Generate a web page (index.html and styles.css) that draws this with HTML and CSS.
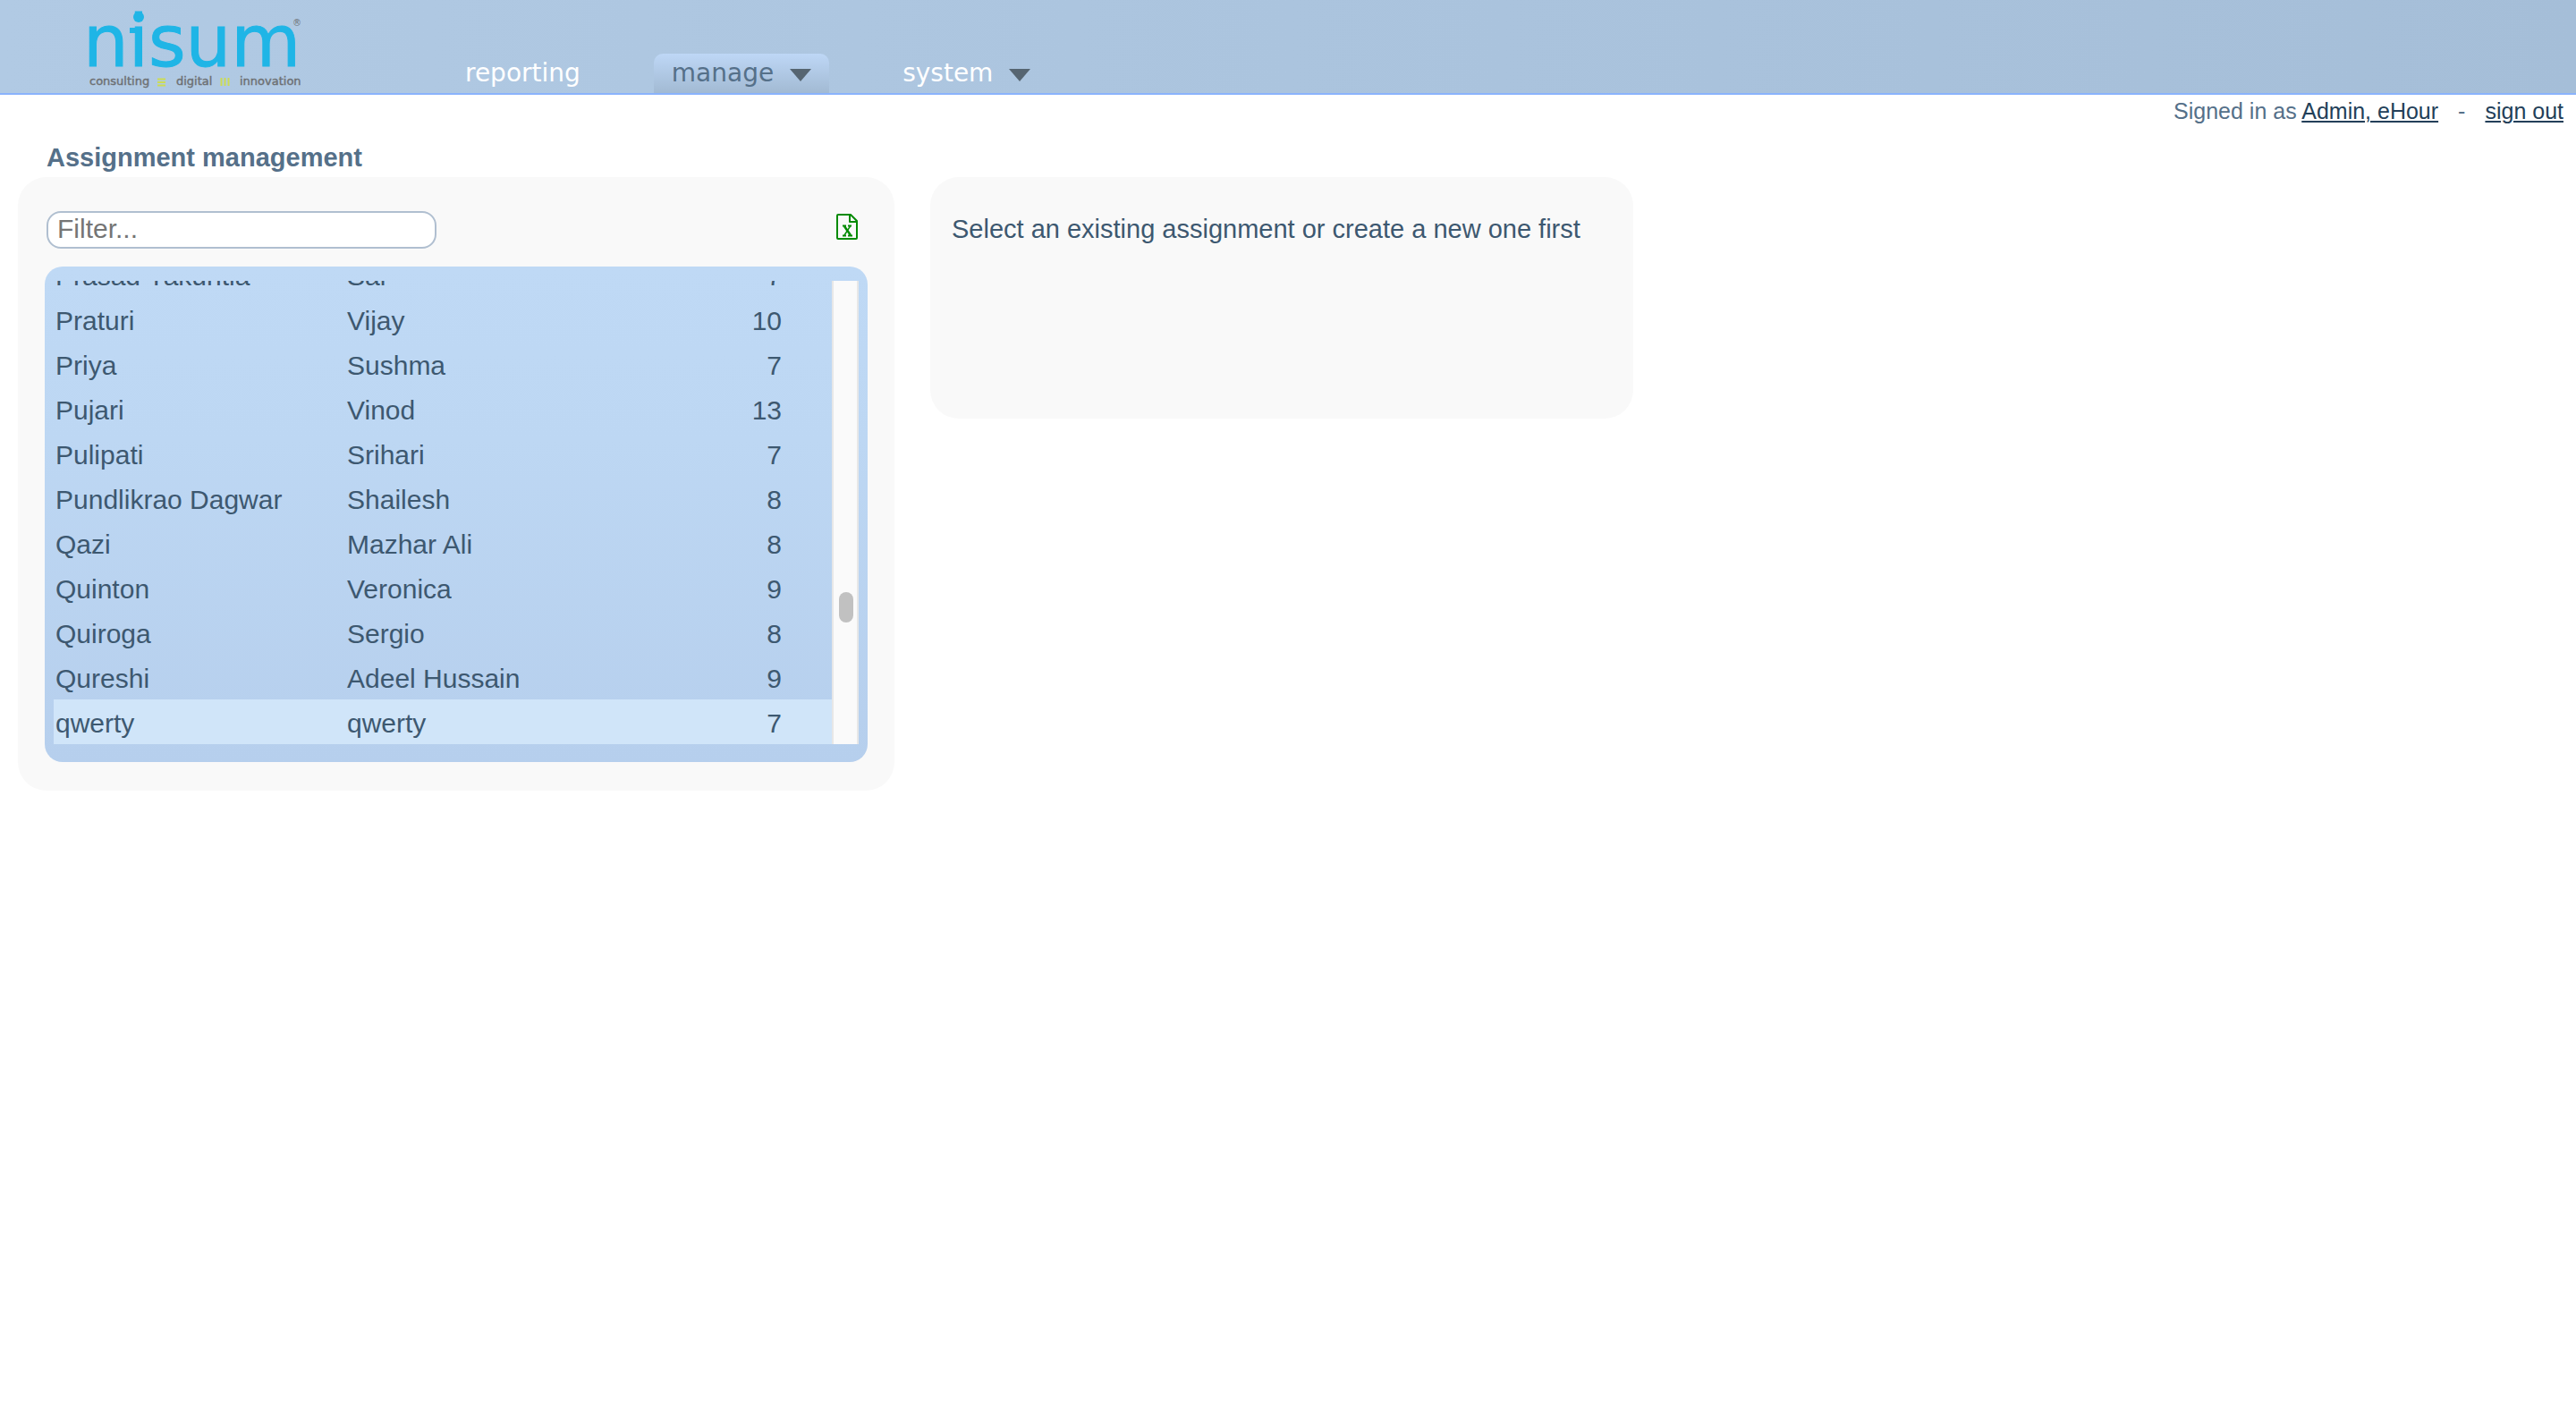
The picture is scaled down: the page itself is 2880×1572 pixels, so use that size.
FILE: index.html
```html
<!DOCTYPE html>
<html lang="en">
<head>
<meta charset="utf-8">
<title>Assignment management</title>
<link rel="stylesheet" href="styles.css">
</head>
<body>
<header class="topbar">
  <a class="logo" href="#" aria-label="nisum">
    <svg width="260" height="104" viewBox="90 0 260 104">
      <text class="logo-name" x="93" y="74">nisum</text>
      <ellipse class="logo-blue" cx="155" cy="19" rx="6" ry="6"/>
      <rect class="logo-blue" x="145" y="31" width="8" height="6"/>
      <text class="logo-reg" x="327" y="29">®</text>
      <text class="logo-tag" x="100" y="95">consulting</text>
      <path class="logo-bars" d="M176 88.500h9M176 92h9M176 95.500h9M247.500 87v9M251.500 87v9M255.500 87v9"/>
      <text class="logo-tag" x="197" y="95">digital</text>
      <text class="logo-tag" x="268" y="95">innovation</text>
    </svg>
  </a>
  <nav class="menu">
    <a class="menu-item" href="#">reporting</a>
    <a class="menu-item active" href="#">manage <svg class="caret" width="24" height="14" viewBox="0 0 24 14"><path d="M0 0h24L12 14z"/></svg></a>
    <a class="menu-item" href="#">system <svg class="caret" width="24" height="14" viewBox="0 0 24 14"><path d="M0 0h24L12 14z"/></svg></a>
  </nav>
</header>
<div class="userbar">
  <span>Signed in as <a href="#">Admin, eHour</a></span>
  <span>-</span>
  <a href="#">sign out</a>
</div>
<main class="content">
  <h1 class="title">Assignment management</h1>
  <div class="panels">
    <section class="card list-card">
      <div class="toolbar">
        <input class="filter" type="text" placeholder="Filter..." aria-label="Filter">
        <button class="export" type="button" aria-label="Export to Excel">
          <svg width="26" height="30" viewBox="0 0 26 30" fill="none" stroke="#048a04" stroke-width="2" stroke-linejoin="round">
            <path d="M2 1h14l7 7v19a1 1 0 0 1-1 1H2a1 1 0 0 1-1-1V2a1 1 0 0 1 1-1z"/>
            <path d="M15 1v8h8"/>
            <path d="M7 13.500h4M13 13.500h4M7 24.500h4M13 24.500h5"/>
            <path stroke-width="2.500" d="M9 14l7 10"/>
            <path stroke-width="1.500" d="M15.500 14L9 24"/>
          </svg>
        </button>
      </div>
      <div class="listbox">
        <div class="viewport">
          <table class="users">
            <tbody>
              <tr><td>Prasad Yakuntla</td><td>Sai</td><td>7</td></tr>
              <tr><td>Praturi</td><td>Vijay</td><td>10</td></tr>
              <tr><td>Priya</td><td>Sushma</td><td>7</td></tr>
              <tr><td>Pujari</td><td>Vinod</td><td>13</td></tr>
              <tr><td>Pulipati</td><td>Srihari</td><td>7</td></tr>
              <tr><td>Pundlikrao Dagwar</td><td>Shailesh</td><td>8</td></tr>
              <tr><td>Qazi</td><td>Mazhar Ali</td><td>8</td></tr>
              <tr><td>Quinton</td><td>Veronica</td><td>9</td></tr>
              <tr><td>Quiroga</td><td>Sergio</td><td>8</td></tr>
              <tr><td>Qureshi</td><td>Adeel Hussain</td><td>9</td></tr>
              <tr class="hover"><td>qwerty</td><td>qwerty</td><td>7</td></tr>
            </tbody>
          </table>
        </div>
        <div class="track"><div class="thumb"></div></div>
      </div>
    </section>
    <section class="card detail-card">
      <p class="hint">Select an existing assignment or create a new one first</p>
    </section>
  </div>
</main>
</body>
</html>
```
FILE: styles.css
```css
* { box-sizing: border-box; }

body {
  margin: 0;
  background: #fff;
  color: #3d5870;
  font-family: "Liberation Sans", Arial, sans-serif;
}

.topbar {
  display: flex;
  height: 106px;
  padding-left: 90px;
  background: linear-gradient(to right, #b1cae4, #a5bed8);
  border-bottom: 2px solid #8ab3fc;
}

.logo svg { display: block; }
.logo-name {
  font: 80px "DejaVu Sans", sans-serif;
  fill: #1fb5e6;
  stroke: #1fb5e6;
  stroke-width: 1px;
}
.logo-blue { fill: #1fb5e6; }
.logo-reg { font: 10px "DejaVu Sans", sans-serif; fill: #6d7073; }
.logo-tag {
  font: 13px "DejaVu Sans", sans-serif;
  fill: #6d7073;
  stroke: #6d7073;
  stroke-width: 0.4px;
}
.logo-bars { stroke: #ccdc55; stroke-width: 2px; fill: none; }

.menu {
  display: flex;
  align-items: flex-end;
  gap: 62px;
  margin-left: 150px;
}
.menu-item {
  display: flex;
  align-items: center;
  gap: 18px;
  height: 44px;
  padding: 0 20px;
  font: 28px/44px "DejaVu Sans", Verdana, sans-serif;
  color: #fff;
  text-decoration: none;
}
.menu-item.active {
  color: #557089;
  background: linear-gradient(#bed7f6, #a2bad3);
  border-radius: 10px 10px 0 0;
}
.caret { fill: #566571; margin-top: 4px; }

.userbar {
  display: flex;
  justify-content: flex-end;
  gap: 22px;
  padding-right: 14px;
  font-size: 25px;
  line-height: 36px;
  color: #557089;
}
.userbar a {
  color: #233f59;
  text-decoration-thickness: 2px;
  text-underline-offset: 2px;
}

.content { padding: 12px 20px 40px; }
.title {
  margin: 0;
  padding-left: 32px;
  font-size: 29px;
  line-height: 44px;
  color: #557089;
}

.panels {
  display: grid;
  grid-template-columns: minmax(0, 980px) minmax(0, 786px);
  align-items: start;
  gap: 40px;
}
.card { background: #f9f9f9; border-radius: 32px; }
.list-card { padding: 38px 30px 32px; }
.detail-card { min-height: 270px; padding: 40px 24px; }
.hint { margin: 0; font-size: 29px; line-height: 36px; }

.toolbar {
  display: flex;
  justify-content: space-between;
  align-items: flex-start;
  padding: 0 9px 0 2px;
  margin-bottom: 20px;
}
.filter {
  width: 436px;
  height: 42px;
  padding: 0 10px 2px;
  border: 2px solid #b0bfd0;
  border-radius: 16px;
  background: #fff;
  font: 30px "Liberation Sans", Arial, sans-serif;
  color: #3d5870;
}
.filter::placeholder { color: #757575; }
.export { margin-top: 3px; padding: 0; border: 0; background: none; cursor: pointer; }
.export svg { display: block; }

.listbox {
  display: flex;
  padding: 16px 10px 20px;
  border-radius: 20px;
  background: linear-gradient(#bfd9f5, #bdd7f3 35%, #b6cfed);
}
.viewport {
  flex: 1;
  display: flex;
  flex-direction: column;
  justify-content: flex-end;
  height: 518px;
  overflow: hidden;
}
.users {
  flex: none;
  width: 100%;
  table-layout: fixed;
  border-collapse: collapse;
  font-size: 30px;
  line-height: 44px;
}
.users td { padding: 5px 0 1px 2px; }
.users td:first-child { width: 326px; }
.users td:last-child { width: 160px; padding-right: 56px; text-align: right; }
.hover { background: #d0e5f9; }

.track {
  width: 30px;
  padding: 348px 6px 0;
  border: solid #e7e7e7;
  border-width: 0 2px;
  background: #fafafa;
}
.thumb { width: 16px; height: 34px; border-radius: 8px; background: #c1c1c1; }
```
